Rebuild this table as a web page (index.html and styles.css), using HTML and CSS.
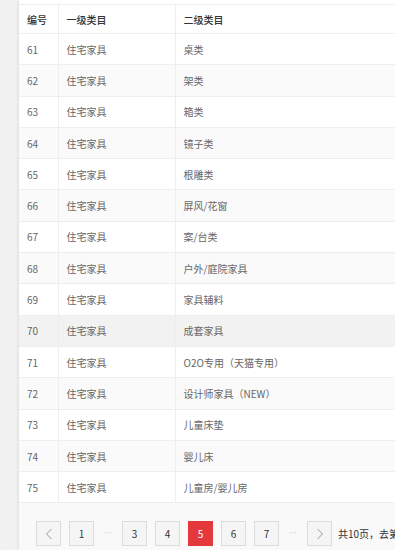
FILE: index.html
```html
<!DOCTYPE html>
<html lang="zh">
<head>
<meta charset="utf-8">
<title>类目列表</title>
<link rel="stylesheet" href="styles.css">
</head>
<body>
<div class="page">
  <div class="card">
    <table class="grid">
      <colgroup><col class="c1"><col class="c2"><col class="c3"></colgroup>
      <thead>
        <tr><th>编号</th><th>一级类目</th><th>二级类目</th></tr>
      </thead>
      <tbody>
        <tr><td>61</td><td>住宅家具</td><td>桌类</td></tr>
        <tr><td>62</td><td>住宅家具</td><td>架类</td></tr>
        <tr><td>63</td><td>住宅家具</td><td>箱类</td></tr>
        <tr><td>64</td><td>住宅家具</td><td>镜子类</td></tr>
        <tr><td>65</td><td>住宅家具</td><td>根雕类</td></tr>
        <tr><td>66</td><td>住宅家具</td><td>屏风/花窗</td></tr>
        <tr><td>67</td><td>住宅家具</td><td>案/台类</td></tr>
        <tr><td>68</td><td>住宅家具</td><td>户外/庭院家具</td></tr>
        <tr><td>69</td><td>住宅家具</td><td>家具辅料</td></tr>
        <tr class="hover"><td>70</td><td>住宅家具</td><td>成套家具</td></tr>
        <tr><td>71</td><td>住宅家具</td><td>O2O专用（天猫专用）</td></tr>
        <tr><td>72</td><td>住宅家具</td><td>设计师家具（NEW）</td></tr>
        <tr><td>73</td><td>住宅家具</td><td>儿童床垫</td></tr>
        <tr><td>74</td><td>住宅家具</td><td>婴儿床</td></tr>
        <tr><td>75</td><td>住宅家具</td><td>儿童房/婴儿房</td></tr>
      </tbody>
    </table>
    <div class="pager">
      <span class="btn arrow"><svg width="8" height="12" viewBox="0 0 8 12"><path d="M6.5 1 L1.5 6 L6.5 11" fill="none" stroke="#999" stroke-width="1"/></svg></span>
      <span class="btn">1</span>
      <span class="dots">···</span>
      <span class="btn">3</span>
      <span class="btn">4</span>
      <span class="btn active">5</span>
      <span class="btn">6</span>
      <span class="btn">7</span>
      <span class="dots">···</span>
      <span class="btn arrow"><svg width="8" height="12" viewBox="0 0 8 12"><path d="M1.5 1 L6.5 6 L1.5 11" fill="none" stroke="#999" stroke-width="1"/></svg></span>
      <span class="info">共10页，去第</span>
    </div>
  </div>
</div>
</body>
</html>
```

FILE: styles.css
```css
html, body {
  margin: 0;
  padding: 0;
  background: #f1f1f1;
  overflow: hidden;
  font-family: "Noto Sans CJK SC", "Noto Sans", sans-serif;
}
.page {
  padding-left: 19px;
  width: 600px;
  height: 550px;
}
.card {
  background: #fff;
  padding-top: 4px;
  height: 546px;
  box-shadow: -1px 0 3px rgba(0,0,0,0.08);
}
.grid {
  border-collapse: collapse;
  table-layout: fixed;
  width: 520px;
  font-size: 10px;
}
.c1 { width: 39px; }
.c2 { width: 117px; }
.c3 { width: 364px; }
.grid th, .grid td {
  text-align: left;
  padding: 0 0 0 8px;
  border: 1px solid #eeeeee;
  border-left: none;
}
.grid th {
  height: 28px;
  color: #333;
  font-weight: 500;
  background: #fff;
}
.grid td {
  height: 30.3px;
  color: #666;
}
.grid tbody tr:nth-child(even) td { background: #fafafa; }
.grid tbody tr.hover td { background: #f2f2f2; }
.pager {
  display: flex;
  align-items: center;
  gap: 8px;
  padding: 13px 0 0 17px;
  height: 35px;
  background: #f9f9f9;
  font-size: 10px;
  color: #333;
}
.btn {
  box-sizing: border-box;
  width: 25px;
  height: 25px;
  border: 1px solid #dcdcdc;
  background: #f5f5f5;
  display: flex;
  align-items: center;
  justify-content: center;
}
.btn.active {
  background: #e4393c;
  border-color: #e4393c;
  color: #fff;
}
.dots {
  width: 12px;
  color: #c8c8c8;
  text-align: center;
  font-family: "DejaVu Sans", sans-serif;
  font-size: 8px;
  letter-spacing: 0;
  white-space: nowrap;
}
.info {
  margin-left: -2px;
  color: #333;
  white-space: nowrap;
}
```
